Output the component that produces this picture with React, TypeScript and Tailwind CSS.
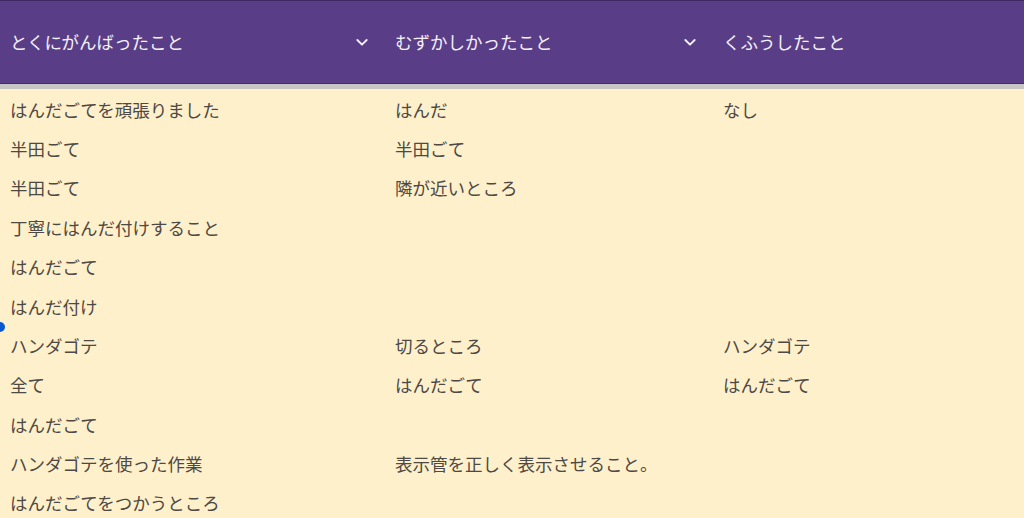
import React from "react";

const rows: [string, string, string][] = [
  ["はんだごてを頑張りました", "はんだ", "なし"],
  ["半田ごて", "半田ごて", ""],
  ["半田ごて", "隣が近いところ", ""],
  ["丁寧にはんだ付けすること", "", ""],
  ["はんだごて", "", ""],
  ["はんだ付け", "", ""],
  ["ハンダゴテ", "切るところ", "ハンダゴテ"],
  ["全て", "はんだごて", "はんだごて"],
  ["はんだごて", "", ""],
  ["ハンダゴテを使った作業", "表示管を正しく表示させること。", ""],
  ["はんだごてをつかうところ", "", ""],
];

function Chevron() {
  return (
    <svg width="16" height="16" viewBox="0 0 24 24" fill="none" stroke="#f3f0f8" strokeWidth="2.8" strokeLinecap="round" strokeLinejoin="round">
      <path d="M5 9l7 7 7-7" />
    </svg>
  );
}

export default function App() {
  return (
    <div
      className="relative w-[1024px] h-[518px] overflow-hidden bg-[#fff0cc]"
      style={{ fontFamily: '"Noto Sans CJK JP", "Noto Sans", sans-serif' }}
    >
      <div className="grid grid-cols-[385px_328px_1fr] h-[84px] bg-[#5a3d87] border-t border-b border-[#3f2a63] text-[#f3f0f8] text-[17.5px]">
        <div className="flex items-center justify-between pl-[10px] pr-[15px]">
          <span>とくにがんばったこと</span>
          <Chevron />
        </div>
        <div className="flex items-center justify-between pl-[10px] pr-[15px]">
          <span>むずかしかったこと</span>
          <Chevron />
        </div>
        <div className="flex items-center pl-[10px]">
          <span>くふうしたこと</span>
        </div>
      </div>
      <div className="h-[5px] bg-[#c8c6c4]" />
      <div className="pt-px text-[#4d4944] text-[17.5px]">
        {rows.map((r, i) => (
          <div key={i} className="grid grid-cols-[385px_328px_1fr] h-[39.4px] items-center">
            {r.map((c, j) => (
              <div key={j} className="pl-[10px] whitespace-nowrap">{c}</div>
            ))}
          </div>
        ))}
      </div>
      <div className="absolute left-[-5px] top-[322px] w-[10px] h-[10px] rounded-full bg-[#0a58d0]" />
    </div>
  );
}
